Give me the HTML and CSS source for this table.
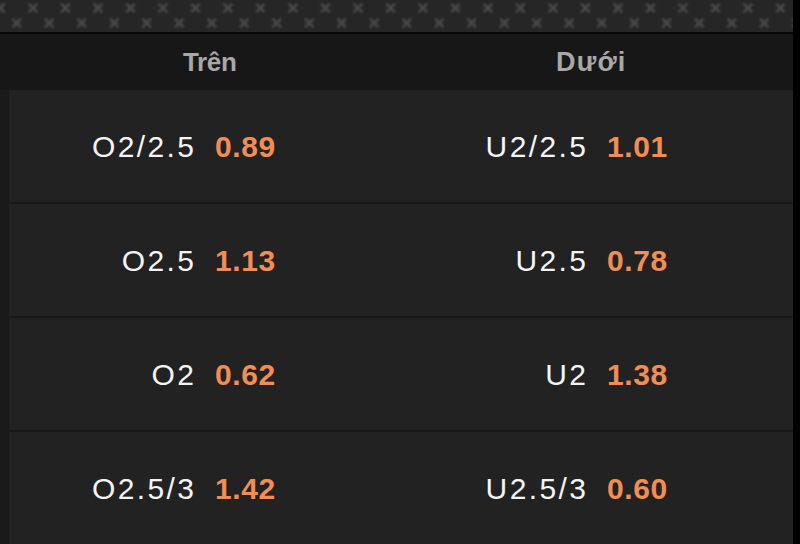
FILE: index.html
```html
<!DOCTYPE html>
<html lang="vi">
<head>
<meta charset="utf-8">
<title>Trên / Dưới</title>
<link rel="stylesheet" href="styles.css">
</head>
<body>
<div class="page">
  <div class="main">
    <div class="band">
      <svg class="band-svg" width="100%" height="32" xmlns="http://www.w3.org/2000/svg">
        <defs>
          <filter id="soft" x="-50%" y="-50%" width="200%" height="200%">
            <feGaussianBlur stdDeviation="0.9"/>
          </filter>
          <pattern id="xs" x="0.5" y="0" width="32.5" height="32" patternUnits="userSpaceOnUse">
            <g stroke="#4a4a4a" stroke-width="2.6" stroke-linecap="round" filter="url(#soft)">
              <path d="M-3.5 4.5 L3.5 11.5 M3.5 4.5 L-3.5 11.5"/>
              <path d="M29 4.5 L36 11.5 M36 4.5 L29 11.5"/>
              <path d="M12.75 19.5 L19.75 26.5 M19.75 19.5 L12.75 26.5"/>
            </g>
          </pattern>
        </defs>
        <rect width="100%" height="32" fill="#262626"/>
        <rect width="100%" height="32" fill="url(#xs)"/>
      </svg>
    </div>
    <div class="rule"></div>
    <div class="head">
      <div class="hcell hcell-over">Trên</div>
      <div class="hcell hcell-under">Dưới</div>
    </div>
    <div class="table">
      <div class="row">
        <div class="cell"><span class="label">O2/2.5</span><span class="odds">0.89</span></div>
        <div class="cell"><span class="label">U2/2.5</span><span class="odds">1.01</span></div>
      </div>
      <div class="row">
        <div class="cell"><span class="label">O2.5</span><span class="odds">1.13</span></div>
        <div class="cell"><span class="label">U2.5</span><span class="odds">0.78</span></div>
      </div>
      <div class="row">
        <div class="cell"><span class="label">O2</span><span class="odds">0.62</span></div>
        <div class="cell"><span class="label">U2</span><span class="odds">1.38</span></div>
      </div>
      <div class="row">
        <div class="cell"><span class="label">O2.5/3</span><span class="odds">1.42</span></div>
        <div class="cell"><span class="label">U2.5/3</span><span class="odds">0.60</span></div>
      </div>
    </div>
  </div>
  <div class="edge"></div>
</div>
</body>
</html>
```
FILE: styles.css
```css
* { box-sizing: border-box; }
html, body {
  margin: 0;
  padding: 0;
  background: #000;
  height: 544px;
  overflow: hidden;
}
body {
  font-family: "Liberation Sans", Arial, sans-serif;
}
.page {
  display: flex;
  width: 800px;
  height: 544px;
}
.main {
  flex: 1;
  display: flex;
  flex-direction: column;
  background: #1a1a1a;
}
.edge {
  width: 7px;
  background: #000;
}
.band {
  height: 32px;
  background: #262626;
}
.band-svg { display: block; }
.rule {
  height: 2px;
  background: #080808;
}
.head {
  height: 56px;
  background: #171717;
  display: grid;
  grid-template-columns: 1fr 1fr;
  padding-left: 10px;
  align-items: center;
}
.hcell {
  text-align: center;
  font-weight: bold;
  font-size: 26px;
  color: #a8a8a8;
  letter-spacing: -0.3px;
  padding-top: 1px;
}
.hcell-over { padding-left: 8px; }
.hcell-under { padding-right: 12px; font-size: 27px; letter-spacing: 1.2px; }
.table {
  flex: 1;
  display: flex;
  flex-direction: column;
  margin-left: 9px;
  background: #222222;
}
.row {
  flex: 1;
  display: grid;
  grid-template-columns: 1fr 1fr;
  border-bottom: 2px solid #181818;
}
.row:last-child { border-bottom: none; }
.cell {
  display: grid;
  grid-template-columns: 185px 1fr;
  column-gap: 21px;
  align-items: center;
  font-size: 30px;
  padding-top: 1px;
}
.label {
  text-align: right;
  color: #f4f4f4;
  letter-spacing: 2.4px;
  margin-right: -2.4px;
}
.odds {
  color: #f18d55;
  font-weight: bold;
  letter-spacing: 0.6px;
}
```
